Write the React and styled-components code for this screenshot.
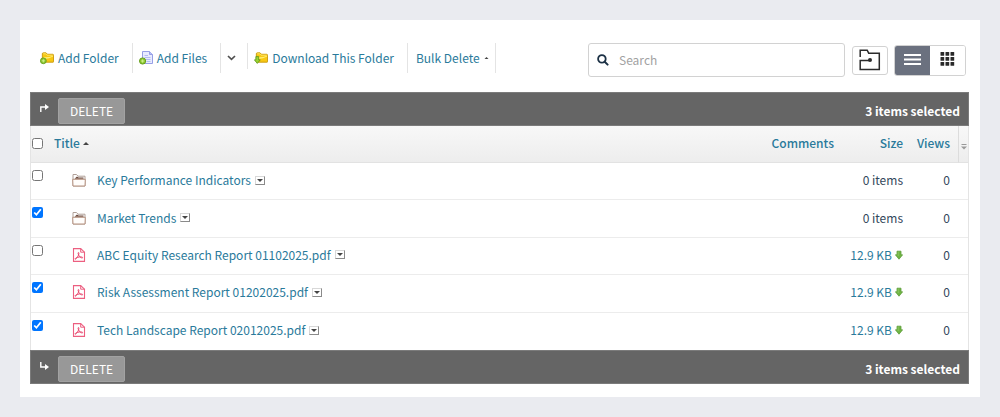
import React, { useState } from 'react';
import styled, { createGlobalStyle } from 'styled-components';

const GlobalStyle = createGlobalStyle`
    * {
        box-sizing: border-box;
    }

    body {
        margin: 0;
        background: #eaebf0;
        color: #33475b;
        font-family: "Noto Sans CJK SC", "Noto Sans", sans-serif;
        font-size: 12px;
        line-height: 18px;
    }

    button, input {
        font: inherit;
    }
`;

const Page = styled.div`
    padding: 20px;
`;

const Card = styled.main`
    background: white;
    padding: 23px 11px 13px 10px;
`;

const Toolbar = styled.div`
    display: flex;
    align-items: flex-start;
    margin-bottom: 15px;
`;

const Actions = styled.div`
    display: flex;
    flex: 1;
`;

const Action = styled.button`
    display: flex;
    align-items: center;
    gap: 4px;
    height: ${props => (props.$short ? '26px' : '30px')};
    padding: ${props => props.$padding || '0 13px 0 6px'};
    border: none;
    border-right: 1px solid #e4e4e4;
    background: none;
    color: #2a7a9b;
    white-space: nowrap;
    cursor: pointer;
`;

const SearchBox = styled.label`
    display: flex;
    align-items: center;
    gap: 10px;
    width: 257px;
    height: 34px;
    padding: 0 8px;
    border: 1px solid #d2d2d2;
    border-radius: 3px;
`;

const SearchInput = styled.input`
    flex: 1;
    min-width: 0;
    padding: 0;
    border: none;
    outline: none;
    background: none;
    color: #33475b;

    &::placeholder {
        color: #a2a2a2;
        opacity: 1;
    }
`;

const FolderButton = styled.button`
    display: flex;
    align-items: center;
    justify-content: center;
    width: 36px;
    height: 29px;
    margin: 3px 6px 0 7px;
    padding: 0 0 2px;
    border: 1px solid #d2d2d2;
    border-radius: 3px;
    background: white;
    cursor: pointer;
`;

const ViewSwitch = styled.div`
    display: flex;
    height: 31px;
    margin: 2px 3px 0 0;
    border: 1px solid #d2d2d2;
    border-radius: 3px;
    overflow: hidden;
`;

const ViewButton = styled.button`
    display: flex;
    justify-content: center;
    width: 35px;
    padding: 6px 0 0;
    border: none;
    background: ${props => (props.$active ? '#6b717f' : 'white')};
    cursor: pointer;
`;

const SelectionBar = styled.div`
    display: flex;
    align-items: center;
    height: 34px;
    padding: 4px 8px 0;
    background: #656565;
    border: 1px solid #7b7b7b;
    color: white;
`;

const ArrowSlot = styled.span`
    display: flex;
    align-items: flex-start;
    height: 16px;
`;

const DeleteButton = styled.button`
    height: 26px;
    margin-left: 8px;
    padding: 0 11px;
    border: 1px solid #a2a2a2;
    border-radius: 2px;
    background: #989898;
    color: white;
    cursor: pointer;
`;

const SelectedCount = styled.span`
    margin-left: auto;
    font-weight: bold;
`;

const FileTable = styled.table`
    width: 100%;
    height: 224px;
    table-layout: fixed;
    border-collapse: separate;
    border-spacing: 0;
    border-left: 1px solid #e4e4e4;
    border-right: 1px solid #e4e4e4;
`;

const HeadCell = styled.th`
    width: ${props => props.$width || 'auto'};
    height: 37px;
    padding: ${props => props.$padding || '0 0 2px'};
    border-bottom: 1px solid #e2e2e2;
    border-left: ${props => (props.$divided ? '1px solid #dcdcdc' : 'none')};
    background: linear-gradient(#f8f8f8, #ededed);
    color: #2a7a9b;
    font-weight: 500;
    text-align: ${props => props.$align || 'left'};
`;

const SortButton = styled.button`
    display: flex;
    align-items: center;
    gap: 3px;
    padding: 0;
    border: none;
    background: none;
    color: inherit;
    cursor: pointer;
`;

const Row = styled.tr`
    height: 37px;

    &:not(:last-child) td {
        border-bottom: 1px solid #ececec;
    }
`;

const Cell = styled.td`
    padding: ${props => props.$padding || '0 0 2px'};
    text-align: ${props => props.$align || 'left'};
    vertical-align: ${props => props.$valign || 'middle'};
    white-space: nowrap;
`;

const Check = styled.input`
    display: block;
    width: 11px;
    height: 11px;
    margin: 0 0 0 1px;
`;

const TitleGroup = styled.div`
    display: flex;
    align-items: center;
`;

const Name = styled.a`
    margin: 0 4px 0 11px;
    color: #2a7a9b;
    text-decoration: none;
`;

const MenuButton = styled.button`
    display: flex;
    align-items: center;
    justify-content: center;
    width: 10px;
    height: 9px;
    padding: 0;
    border: 1px solid #d8d8d8;
    border-right-color: #8a8a8a;
    border-bottom-color: #8a8a8a;
    background: white;
    cursor: pointer;
`;

const SizeLink = styled.a`
    display: inline-flex;
    align-items: center;
    gap: 3px;
    color: #2a7a9b;
    text-decoration: none;
`;

const ConfigButton = styled.button`
    display: block;
    margin: 8px 0 0 2px;
    padding: 0;
    border: none;
    background: none;
    line-height: 0;
    cursor: pointer;
`;

const Triangle = ({ up, size = 6 }) => (
    <svg width={size} height={size / 2} viewBox="0 0 6 3" aria-hidden="true">
        <path d={up ? 'M0 3L3 0L6 3Z' : 'M0 0H6L3 3Z'} fill="#444" />
    </svg>
);

const YellowFolder = ({ children }) => (
    <svg width="14" height="14" viewBox="0 0 15 14" aria-hidden="true">
        <path d="M2.5 11V2.5Q2.5 1.5 3.5 1.5H6.5L8 3H13.5Q14.5 3 14.5 4V11Q14.5 11.5 14 11.5H3Z" fill="#f8c813" stroke="#c9980c" />
        <path d="M4 6Q8 7 14 4.5V5.5Q10 8 4 8Z" fill="#fff07a" />
        <path d="M3.5 2.5H6.2L7.5 4H13.5" fill="none" stroke="#ffe666" />
        {children}
    </svg>
);

const PlusBadge = () => (
    <g>
        <circle cx="3.6" cy="10" r="3.1" fill="#8cc832" stroke="#669f1e" />
        <path d="M3.6 8.4V11.6M2 10H5.2" stroke="#cdf08c" strokeWidth="1" />
    </g>
);

const AddFolderIcon = () => <YellowFolder><PlusBadge /></YellowFolder>;

const DownloadFolderIcon = () => (
    <YellowFolder>
        <path d="M2 5.5H5V9H6.7L3.5 12.8L.4 9H2Z" fill="#9bd32f" stroke="#55921b" strokeWidth=".8" />
    </YellowFolder>
);

const AddFilesIcon = () => (
    <svg width="14" height="14" viewBox="0 0 14 14" aria-hidden="true">
        <path d="M3.5 .5H10.5L13.5 3.5V12.5H3.5Z" fill="#e8ebff" stroke="#979fe6" />
        <path d="M10.5 .5V3.5H13.5" fill="#b8c0f7" stroke="#979fe6" />
        <path d="M5.5 4.5H9M5.5 6.5H11.5M6.5 8.5H11.5M7.5 10.5H11.5" stroke="#b4bcf2" />
        <PlusBadge />
    </svg>
);

const ChevronIcon = () => (
    <svg width="9" height="6" viewBox="0 0 9 6" aria-hidden="true">
        <path d="M1 1L4.5 4.3L8 1" fill="none" stroke="#505050" strokeWidth="1.7" />
    </svg>
);

const SearchIcon = () => (
    <svg width="12" height="12" viewBox="0 0 12 12" aria-hidden="true">
        <circle cx="4.9" cy="4.9" r="3.8" fill="none" stroke="#1c3145" strokeWidth="1.8" />
        <path d="M7.7 7.7L10.6 10.6" stroke="#1c3145" strokeWidth="2" strokeLinecap="round" />
    </svg>
);

const FolderOutlineIcon = () => (
    <svg width="22" height="22" viewBox="0 0 22 22" aria-hidden="true">
        <path d="M1.2 8V1.2H8.2L9.7 4.2H20.3V20.6H1.2V11.5H10.5" fill="none" stroke="#2b2b2b" strokeWidth="1.5" />
        <circle cx="11" cy="11" r="2" fill="#2b2b2b" />
    </svg>
);

const ListIcon = () => (
    <svg width="17" height="14" viewBox="0 0 17 14" aria-hidden="true">
        <path d="M0 3H17M0 7.5H17M0 12H17" stroke="white" strokeWidth="1.8" />
    </svg>
);

const GridIcon = () => (
    <svg width="15" height="15" viewBox="0 0 15 15" aria-hidden="true">
        {[0, 5, 10].map(y => [0, 5, 10].map(x => (
            <rect key={`${x}-${y}`} x={x + 0.5} y={y} width="3.7" height="3.7" rx=".5" fill="#292929" />
        )))}
    </svg>
);

const TurnArrow = ({ down }) => (
    <svg width="11" height="10" viewBox="0 0 11 10" aria-hidden="true">
        <g transform={down ? 'matrix(1 0 0 -1 0 10)' : undefined}>
            <path d="M1.8 9V4H7" fill="none" stroke="white" strokeWidth="1.4" />
            <path d="M6 1L10 4L6 7Z" fill="white" />
        </g>
    </svg>
);

const FolderIcon = () => (
    <svg width="14" height="14" viewBox="0 0 14 14" aria-hidden="true">
        <path d="M1 13V1.5H4.5L6 3.2H13V13Z" fill="#fff" stroke="#b0a098" />
        <path d="M2.5 5.8L5 3.6L6.5 4.6H11.5V5.8H2.5Z" fill="#6d4a3d" />
        <path d="M1 13L.7 6.3H13.3L13 13Z" fill="#fffdfb" stroke="#b5917f" />
    </svg>
);

const PdfIcon = () => (
    <svg width="14" height="14" viewBox="0 0 14 14" aria-hidden="true">
        <path d="M1.5 .6H8.7L12.5 4.2V13.4H1.5Z" fill="white" stroke="#ec5f80" strokeWidth="1.1" />
        <path d="M8.7 .6V4.2H12.5" fill="none" stroke="#ec5f80" />
        <path d="M6.4 4.5C7.5 4.5 6.8 7.2 5.2 9.5C4 11.3 2.8 11.6 3 10.8C3.4 9.6 6.8 8.8 9.7 9C11.4 9.2 10.8 10.4 9.3 9.8C7.2 8.9 5.3 5 6.4 4.5Z" fill="none" stroke="#e63f68" strokeWidth=".9" />
    </svg>
);

const DownArrowIcon = () => (
    <svg width="8" height="10" viewBox="0 0 8 10" aria-hidden="true">
        <path d="M2 1.2H6V4.8H7.6L4 9.2L.4 4.8H2Z" fill="#70b544" stroke="#5c9c38" strokeWidth=".8" />
        <path d="M3.2 1.8V6" stroke="#8cc562" />
    </svg>
);

const initialItems = [
    { name: 'Key Performance Indicators', folder: true, size: '0 items', views: 0, selected: false },
    { name: 'Market Trends', folder: true, size: '0 items', views: 0, selected: true },
    { name: 'ABC Equity Research Report 01102025.pdf', size: '12.9 KB', views: 0, selected: false },
    { name: 'Risk Assessment Report 01202025.pdf', size: '12.9 KB', views: 0, selected: true },
    { name: 'Tech Landscape Report 02012025.pdf', size: '12.9 KB', views: 0, selected: true },
];

const BulkBar = ({ count, down }) => (
    <SelectionBar>
        <ArrowSlot><TurnArrow down={down} /></ArrowSlot>
        <DeleteButton type="button">DELETE</DeleteButton>
        <SelectedCount>{count} items selected</SelectedCount>
    </SelectionBar>
);

const App = () => {
    const [items, setItems] = useState(initialItems);
    const [view, setView] = useState('list');

    const count = items.filter(item => item.selected).length;

    const toggle = index => {
        setItems(items.map((item, i) => (i === index ? { ...item, selected: !item.selected } : item)));
    };

    const toggleAll = e => {
        setItems(items.map(item => ({ ...item, selected: e.target.checked })));
    };

    return (
        <Page>
            <GlobalStyle />
            <Card>
                <Toolbar>
                    <Actions>
                        <Action type="button" $padding="0 13px 0 10px"><AddFolderIcon />Add Folder</Action>
                        <Action type="button"><AddFilesIcon />Add Files</Action>
                        <Action type="button" aria-label="More file options" $short $padding="4px 11px 0 6px"><ChevronIcon /></Action>
                        <Action type="button"><DownloadFolderIcon />Download This Folder</Action>
                        <Action type="button" $padding="0 6px 0 8px">Bulk Delete<Triangle up size={5} /></Action>
                    </Actions>
                    <SearchBox>
                        <SearchIcon />
                        <SearchInput type="text" placeholder="Search" aria-label="Search" />
                    </SearchBox>
                    <FolderButton type="button" aria-label="Search in folder"><FolderOutlineIcon /></FolderButton>
                    <ViewSwitch>
                        <ViewButton type="button" aria-label="List view" $active={view === 'list'} onClick={() => setView('list')}>
                            <ListIcon />
                        </ViewButton>
                        <ViewButton type="button" aria-label="Grid view" $active={view === 'grid'} onClick={() => setView('grid')}>
                            <GridIcon />
                        </ViewButton>
                    </ViewSwitch>
                </Toolbar>
                <BulkBar count={count} />
                <FileTable>
                    <thead>
                        <tr>
                            <HeadCell $width="23px">
                                <Check type="checkbox" aria-label="Select all" checked={count === items.length} onChange={toggleAll} />
                            </HeadCell>
                            <HeadCell><SortButton type="button">Title<Triangle up /></SortButton></HeadCell>
                            <HeadCell $width="80px" $align="right">Comments</HeadCell>
                            <HeadCell $width="69px" $align="right">Size</HeadCell>
                            <HeadCell $width="55px" $align="right" $padding="0 8px 2px 0">Views</HeadCell>
                            <HeadCell $width="10px" $divided>
                                <ConfigButton type="button" aria-label="Choose columns">
                                    <svg width="6" height="6" viewBox="0 0 6 6" aria-hidden="true">
                                        <path d="M.5 .5H5.5" stroke="#999" />
                                        <path d="M0 2.5H6L3 5.5Z" fill="#999" />
                                    </svg>
                                </ConfigButton>
                            </HeadCell>
                        </tr>
                    </thead>
                    <tbody>
                        {items.map((item, index) => (
                            <Row key={item.name}>
                                <Cell $valign="top" $padding="7px 0 0">
                                    <Check
                                        type="checkbox"
                                        aria-label={`Select ${item.name}`}
                                        checked={item.selected}
                                        onChange={() => toggle(index)}
                                    />
                                </Cell>
                                <Cell $padding="0 0 2px 18px">
                                    <TitleGroup>
                                        {item.folder ? <FolderIcon /> : <PdfIcon />}
                                        <Name href="#">{item.name}</Name>
                                        <MenuButton type="button" aria-label={`Options for ${item.name}`}>
                                            <Triangle />
                                        </MenuButton>
                                    </TitleGroup>
                                </Cell>
                                <Cell />
                                <Cell $align="right">
                                    {item.folder ? item.size : <SizeLink href="#">{item.size}<DownArrowIcon /></SizeLink>}
                                </Cell>
                                <Cell $align="right" $padding="0 8px 2px 0">{item.views}</Cell>
                                <Cell />
                            </Row>
                        ))}
                    </tbody>
                </FileTable>
                <BulkBar count={count} down />
            </Card>
        </Page>
    );
};

export default App;
